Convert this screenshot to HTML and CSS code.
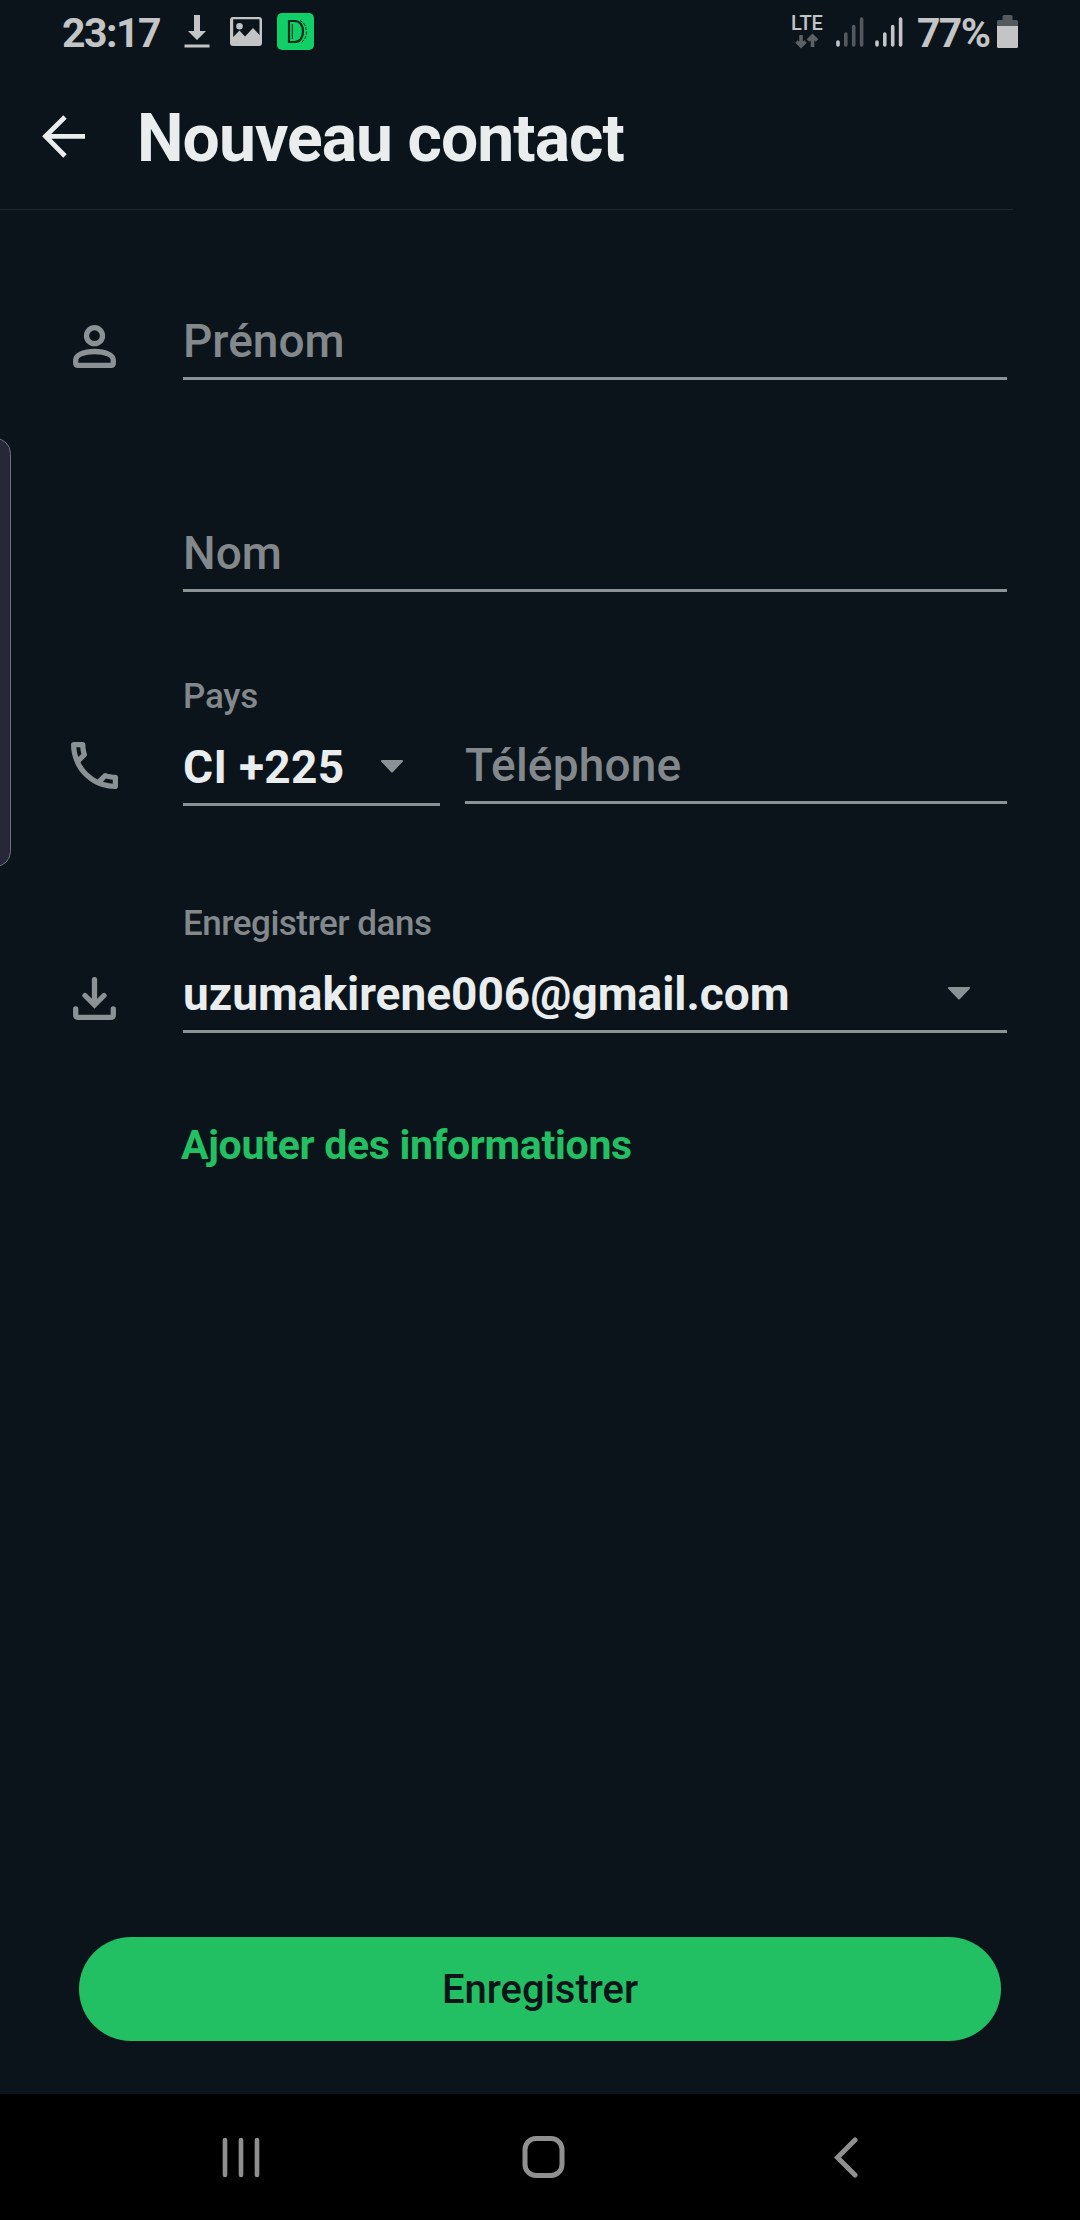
FILE: index.html
```html
<!DOCTYPE html>
<html lang="fr">
<head>
<meta charset="utf-8">
<title>Nouveau contact</title>
<link rel="stylesheet" href="styles.css">
</head>
<body>
<div class="screen">
  <div class="status">
    <span class="clock">23:17</span>
    <svg class="st-download" width="26" height="34" viewBox="0 0 26 34"><path d="M10 0h6v16h6l-9 9-9-9h6zM0.500 29.500h25v3H0.500z" fill="#c3c4c6"/></svg>
    <svg class="st-image" width="32" height="30" viewBox="0 0 32 30"><path fill-rule="evenodd" d="M3 0h26a3 3 0 0 1 3 3v23a3 3 0 0 1-3 3H3a3 3 0 0 1-3-3V3a3 3 0 0 1 3-3zM3.200 2.200V20l6.300-6.500 5.500 6 8-8.500 6.500 7V2.200zM9.500 6a3.300 3.300 0 1 1 0 6.600 3.300 3.300 0 0 1 0-6.600z" fill="#c3c4c6"/></svg>
    <svg class="st-app" width="37" height="37" viewBox="0 0 37 37"><rect width="37" height="37" rx="5" fill="#10cf67"/><path d="M12 8h5.500c5 0 8.500 4 8.500 10.500s-3.500 10.500-8.500 10.500H12z" fill="none" stroke="#07281c" stroke-width="2.200"/><path d="M15.300 11v15" fill="none" stroke="#07281c" stroke-width="1"/><path d="M23 7.500c8.500 4 8.500 18 1 22" fill="none" stroke="#07281c" stroke-width="1" stroke-dasharray="3 1.500"/></svg>
    <div class="lte">
      <span>LTE</span>
      <svg width="24" height="16" viewBox="0 0 24 16"><path d="M6 2v11M1.500 8.500L6 13l4.500-4.500M17.500 14V3M13 7.500L17.500 3 22 7.500" fill="none" stroke="#5c6165" stroke-width="3.600"/></svg>
    </div>
    <svg class="sig" width="28" height="30" viewBox="0 0 28 30"><g stroke-width="3.600" stroke-linecap="round"><path d="M2 25v3" stroke="#c3c4c6"/><path d="M9.800 17v11M17.700 9.500V28M25.600 2v26" stroke="#54595d"/></g></svg>
    <svg class="sig" width="28" height="30" viewBox="0 0 28 30"><path d="M2 25v3M9.800 17v11M17.700 9.500V28M25.600 2v26" stroke="#c3c4c6" stroke-width="3.600" stroke-linecap="round"/></svg>
    <span class="percent">77%</span>
    <svg class="battery" width="21" height="33" viewBox="0 0 21 33"><path d="M0 11V6.500Q0 5 1.500 5H5.500V1.500Q5.500 0 7 0h7q1.500 0 1.500 1.500V5h4Q21 5 21 6.500V11z" fill="#54595d"/><path d="M0 11h21v20.500q0 1.500-1.500 1.500h-18Q0 33 0 31.500z" fill="#c3c4c6"/></svg>
  </div>

  <header class="header">
    <svg class="back" width="43" height="43" viewBox="0 0 43 43"><path d="M23 2L3.500 21.300 23 41M3.500 21.300H43" fill="none" stroke="#e9edee" stroke-width="4.800"/></svg>
    <h1 class="title">Nouveau contact</h1>
  </header>
  <div class="divider"></div>

  <main class="form">
    <div class="row row-first">
      <svg class="icon icon-person" width="43" height="43" viewBox="0 0 43 43"><g fill="none" stroke="#8a9296" stroke-width="5.300"><circle cx="21.500" cy="10.700" r="8"/><path d="M2.700 36v-1c0-5 8-8.500 18.800-8.500s18.800 3.500 18.800 8.500V38q0 2.400-2.400 2.400H5.100q-2.400 0-2.400-2.400z"/></g></svg>
      <div class="field"><span class="value hint">Prénom</span></div>
    </div>
    <div class="row row-last">
      <div class="field"><span class="value hint">Nom</span></div>
    </div>
    <div class="row row-phone">
      <svg class="icon icon-phone" width="47" height="47" viewBox="3 3 18 18"><path d="M6.540 5c.06.89.21 1.760.45 2.590l-1.200 1.200c-.41-1.200-.67-2.470-.76-3.790h1.510m9.860 12.020c.85.24 1.720.39 2.600.45v1.490c-1.320-.09-2.590-.35-3.800-.75l1.200-1.190M7.500 3H4c-.55 0-1 .45-1 1 0 9.390 7.610 17 17 17 .55 0 1-.45 1-1v-3.490c0-.55-.45-1-1-1-1.240 0-2.450-.2-3.570-.57-.1-.04-.21-.05-.31-.05-.26 0-.51.1-.71.29l-2.200 2.200c-2.830-1.450-5.150-3.760-6.590-6.590l2.200-2.200c.28-.28.36-.67.25-1.020C8.700 6.450 8.500 5.250 8.500 4c0-.55-.45-1-1-1z" fill="#8a9296"/></svg>
      <div class="field country">
        <span class="label">Pays</span>
        <div class="select"><span class="value code">CI +225</span><svg width="24" height="13" viewBox="0 0 24 13"><path d="M2 1h20L12 11.500z" fill="#8a9296" stroke="#8a9296" stroke-width="2" stroke-linejoin="round"/></svg></div>
      </div>
      <div class="field phone"><span class="value hint hint-phone">Téléphone</span></div>
    </div>
    <div class="row row-save">
      <svg class="icon icon-save" width="43" height="43" viewBox="0 0 43 43"><path d="M21.500 2.600V27M12 18.500l9.500 9.500 9.500-9.500M2.700 32v5.700q0 2.600 2.600 2.600h32.400q2.600 0 2.600-2.600V32" fill="none" stroke="#8a9296" stroke-width="5.300" stroke-linecap="round"/></svg>
      <div class="field">
        <span class="label label-save">Enregistrer dans</span>
        <div class="select"><span class="value">uzumakirene006@gmail.com</span><svg width="24" height="13" viewBox="0 0 24 13"><path d="M2 1h20L12 11.500z" fill="#8a9296" stroke="#8a9296" stroke-width="2" stroke-linejoin="round"/></svg></div>
      </div>
    </div>
    <a class="more">Ajouter des informations</a>
  </main>

  <button class="save">Enregistrer</button>

  <nav class="nav">
    <svg width="38" height="42" viewBox="0 0 38 42"><path d="M3 3v35M19 3v35M35 3v35" stroke="#909090" stroke-width="4.600" stroke-linecap="round"/></svg>
    <svg class="home" width="44" height="44" viewBox="0 0 44 44"><rect x="3" y="2.500" width="37" height="37" rx="11" fill="none" stroke="#909090" stroke-width="5"/></svg>
    <svg width="24" height="42" viewBox="0 0 24 42"><path d="M21 3L3.500 20.500 21 38" fill="none" stroke="#909090" stroke-width="5" stroke-linecap="round"/></svg>
  </nav>
  <div class="edge-handle"></div>
</div>
</body>
</html>
```
FILE: styles.css
```css
* { box-sizing: border-box; }
body {
  margin: 0;
  background: #0b141a;
  font-family: Roboto, "Liberation Sans", sans-serif;
}
svg { display: block; flex: none; }
.screen {
  position: relative;
  display: flex;
  flex-direction: column;
  width: 1080px;
  height: 2220px;
  overflow: hidden;
}
.status {
  display: flex;
  align-items: flex-start;
  height: 70px;
  padding-left: 62px;
  color: #c3c4c6;
  font-size: 41px;
  font-weight: 700;
  line-height: 66px;
  white-space: nowrap;
}
.clock { width: 122px; letter-spacing: -1.5px; }
.st-download { margin-top: 15px; }
.st-image { margin: 17px 0 0 20px; }
.st-app { margin: 13px 0 0 15px; }
.lte {
  display: flex;
  flex-direction: column;
  align-items: center;
  width: 34px;
  margin: 14px 12px 0 476px;
  font-size: 20px;
  font-weight: 500;
  line-height: 18px;
}
.lte svg { margin-top: 1px; }
.sig { margin: 17px 11px 0 0; }
.percent { width: 80px; margin-left: 3px; letter-spacing: -1.7px; }
.battery { margin-top: 15px; }

.header {
  display: flex;
  align-items: center;
  height: 139px;
  padding-left: 42px;
}
.back { margin-right: 52px; margin-top: -6px; }
.title {
  margin: -2px 0 0;
  font-size: 66px;
  font-weight: 700;
  line-height: 78px;
  letter-spacing: -0.95px;
  color: #e9edee;
  white-space: nowrap;
}
.divider { width: 1013px; height: 1px; background: #212a30; }

.row {
  display: flex;
  align-items: flex-end;
  padding: 0 73px;
}
.row-first { height: 170px; }
.row-last { height: 212px; padding-left: 183px; }
.row-phone { height: 214px; padding-left: 71px; }
.row-save { height: 227px; }
.icon-person { margin: 0 67px 12px 0; }
.icon-phone { margin: 0 65px 17px 0; }
.icon-save { margin: 0 67px 13px 0; }
.field {
  display: flex;
  flex: 1;
  flex-direction: column;
  padding-bottom: 9px;
  border-bottom: 3px solid #8a9296;
  white-space: nowrap;
}
.country { flex: none; width: 257px; margin-right: 25px; }
.phone { margin-bottom: 2px; }
.label {
  margin-bottom: 22px;
  font-size: 35px;
  font-weight: 500;
  line-height: 42px;
  letter-spacing: -0.2px;
  color: #82888b;
}
.label-save { letter-spacing: -0.5px; }
.select { display: flex; align-items: center; justify-content: space-between; padding-right: 36px; }
.select svg { margin-top: -1px; }
.value {
  font-size: 46px;
  font-weight: 700;
  line-height: 54px;
  color: #e9edee;
}
.code { letter-spacing: 0.3px; }
.hint { font-weight: 500; color: #82888b; }
.hint-phone { letter-spacing: 0.2px; }
.more {
  display: block;
  margin: 84px 0 0 181px;
  font-size: 41px;
  font-weight: 700;
  line-height: 56px;
  letter-spacing: -0.3px;
  color: #23c063;
}

.save {
  flex: none;
  width: 922px;
  height: 104px;
  margin: auto 0 53px 79px;
  padding: 1px 0 0;
  border: 0;
  border-radius: 52px;
  background: #23c063;
  color: #0b141a;
  font: 500 40px/103px Roboto, "Liberation Sans", sans-serif;
}
.nav {
  display: flex;
  flex: none;
  justify-content: space-between;
  height: 126px;
  padding: 43px 222px 0 222px;
  background: #000;
}
.home { margin: -1px 6px 0 0; }
.edge-handle {
  position: absolute;
  top: 438px;
  left: -20px;
  width: 31px;
  height: 429px;
  border: 1px solid #6e7078;
  border-radius: 16px;
  background: #27273a;
}
```
